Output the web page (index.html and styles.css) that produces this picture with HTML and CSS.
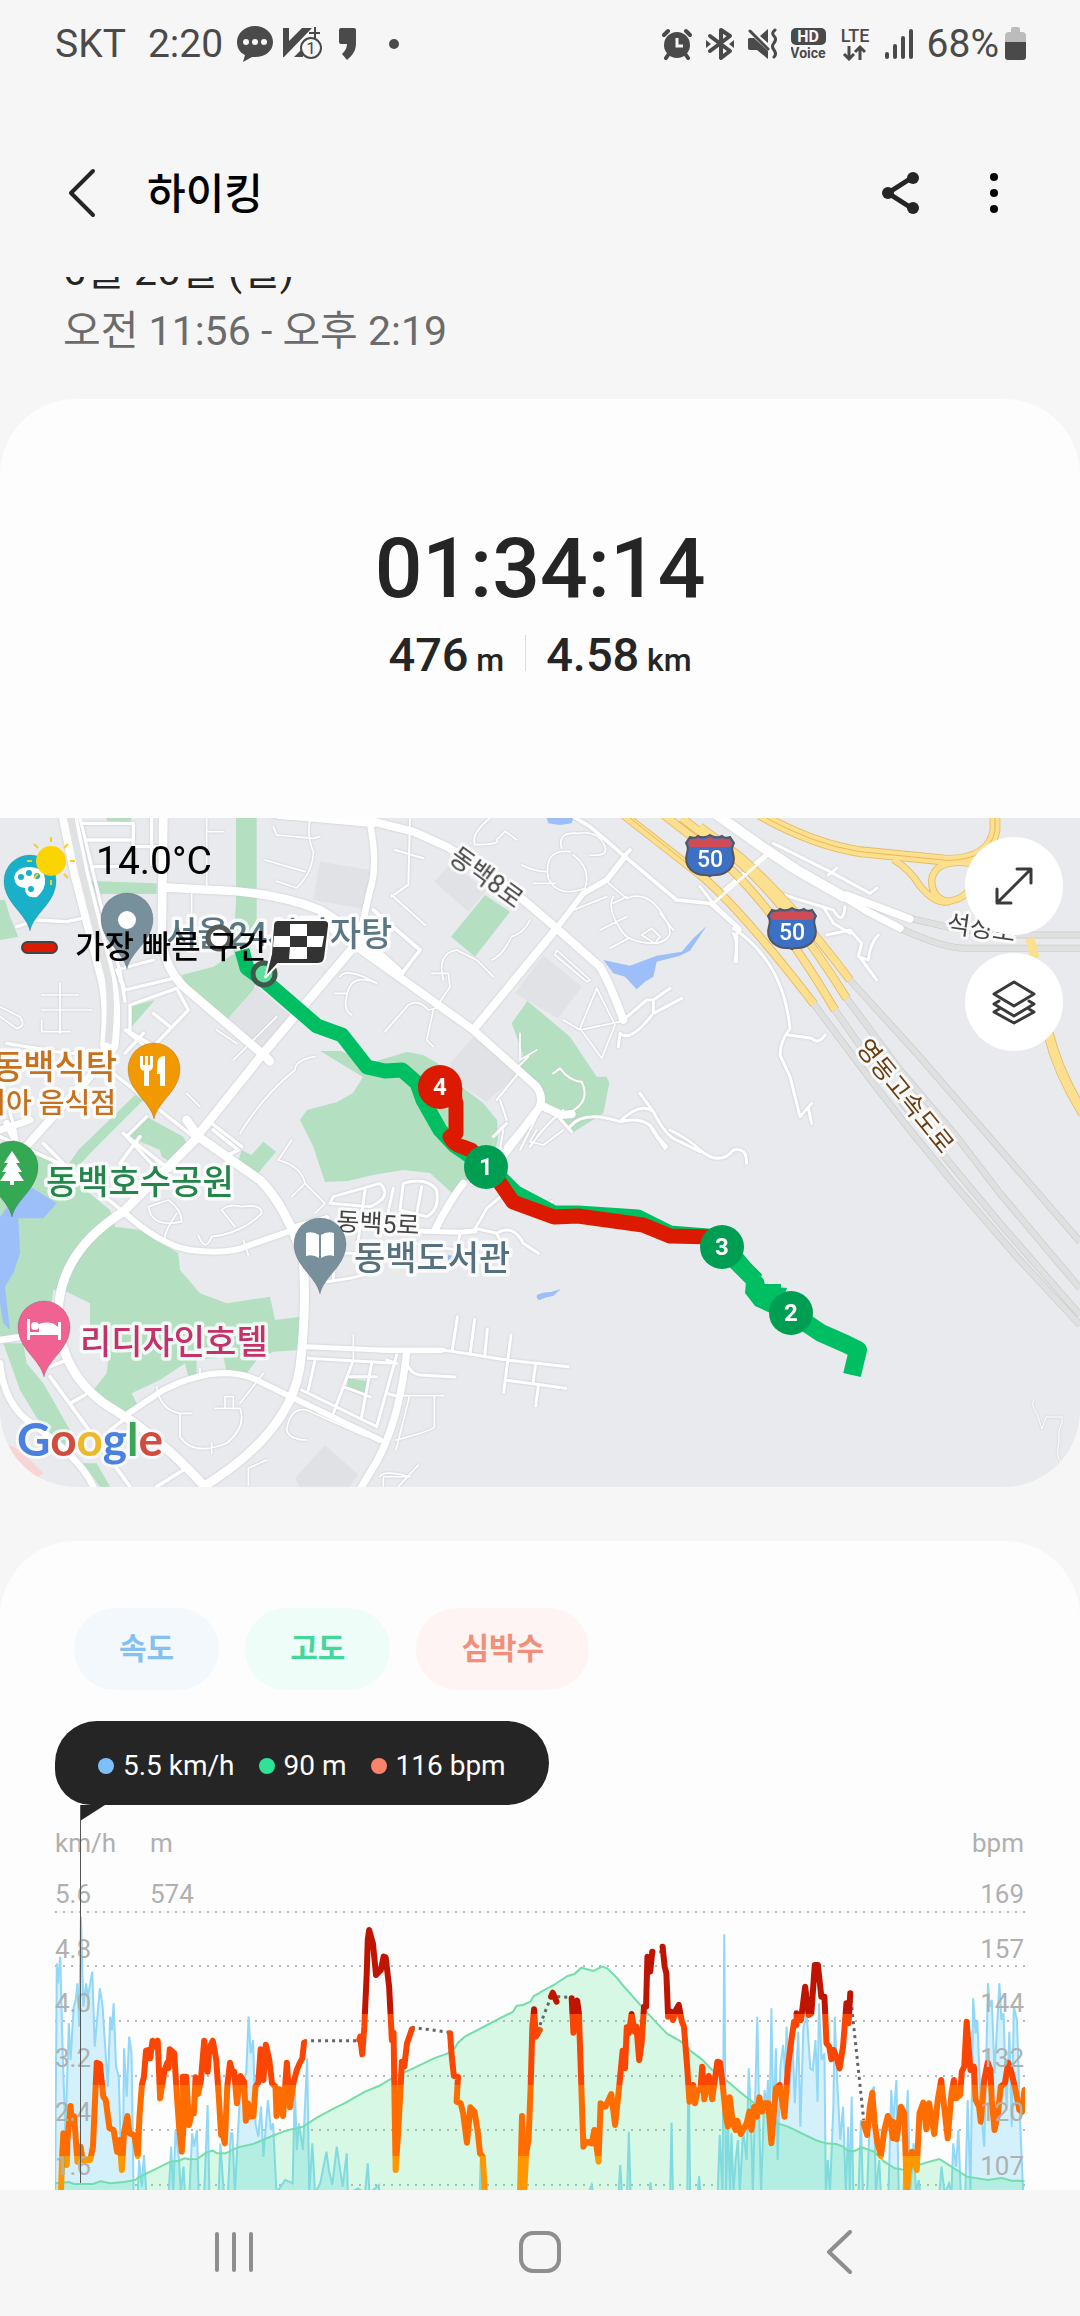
FILE: index.html
```html
<!DOCTYPE html>
<html lang="ko">
<head>
    <meta charset="utf-8">
    <title>하이킹</title>
    <meta name="viewport" content="width=device-width, initial-scale=1">
    <link rel="stylesheet" href="styles.css">
</head>
<body>
    <div class="status-bar">
        <div class="status-left">
            <span>SKT</span>
            <span class="clock">2:20</span>
            <svg class="talk" width="36" height="36" viewBox="0 0 36 36"><path fill="#4a4a4a" d="M18 0C8 0 0 7 0 16c0 6 3 11 8 13L6 36l9-5h3c10 0 18-6 18-15S28 0 18 0z"/><g fill="#f6f6f6"><circle cx="9" cy="16" r="3"/><circle cx="18" cy="16" r="3"/><circle cx="27" cy="16" r="3"/></g></svg>
            <svg width="40" height="34" viewBox="0 0 40 34"><path fill="#4a4a4a" d="M0 1h6v13L19 1h10L1 30H0zM11 30l9-9v9z"/><path stroke="#4a4a4a" stroke-width="2" fill="none" d="M26 6h11M32 0v11"/><circle cx="28" cy="21" r="10" fill="#f6f6f6" stroke="#4a4a4a" stroke-width="2"/><text x="28" y="27" class="badge-num">1</text></svg>
            <svg class="quote" width="18" height="32" viewBox="0 0 18 32"><path fill="#4a4a4a" d="M2 0h13q2 0 2 2v13c0 7-3 12-9 17l-5-6c3-3 5-6 5-10H2q-2 0-2-2V2q0-2 2-2z"/></svg>
            <i class="more-dot"></i>
        </div>
        <div class="status-right">
            <svg width="30" height="32" viewBox="0 0 30 32"><circle cx="15" cy="17" r="13" fill="#4a4a4a"/><path stroke="#4a4a4a" stroke-width="4" stroke-linecap="round" fill="none" d="M2 7l4-4M28 7l-4-4M6 27l-2 3M24 27l2 3"/><path stroke="#f6f6f6" stroke-width="3" fill="none" d="M15 10v8h6"/></svg>
            <svg width="28" height="34" viewBox="0 0 28 34"><path stroke="#4a4a4a" stroke-width="4" stroke-linejoin="round" stroke-linecap="round" fill="none" d="M4 9l20 15-9 7V3l9 6L4 24"/><path fill="#4a4a4a" d="M0 13l5 4-5 4zM28 13l-5 4 5 4z"/></svg>
            <svg width="29" height="32" viewBox="0 0 29 32"><path fill="#4a4a4a" d="M0 11q0-1 2-1h4l14 13v8L9 22H2q-2 0-2-2zM12 8l8-7v14z"/><path stroke="#4a4a4a" stroke-width="3" stroke-linecap="round" fill="none" d="M2 3l18 18M27 2q-4 3-1 6t0 7q-3 3 0 7t0 7"/></svg>
            <svg width="35" height="32" viewBox="0 0 35 32"><rect width="35" height="17" rx="5" fill="#4a4a4a"/><text x="17" y="14" class="hd">HD</text><text x="17" y="30" class="voice">Voice</text></svg>
            <svg width="30" height="34" viewBox="0 0 30 34"><text x="15" y="15" class="lte">LTE</text><path stroke="#4a4a4a" stroke-width="3" fill="none" d="M9 19v13M4 27l5 5 5-5M20 33V20M15 25l5-5 5 5"/></svg>
            <svg width="29" height="32" viewBox="0 0 29 32"><path stroke="#4a4a4a" stroke-width="4" stroke-linecap="round" d="M3 26v3M11 18v11M19 10v19M27 3v26"/></svg>
            <div class="battery">
                <span>68%</span>
                <svg width="21" height="34" viewBox="0 0 21 34"><path fill="#bcbcbc" d="M6 2q0-2 2-2h5q2 0 2 2v3h2q4 0 4 4v8H0V9q0-4 4-4h2z"/><path fill="#4a4a4a" d="M0 15h21v15q0 3-3 3H3q-3 0-3-3z"/></svg>
            </div>
        </div>
    </div>

    <header class="app-bar">
        <button class="icon-btn" aria-label="뒤로"><svg width="28" height="50" viewBox="0 0 28 50"><path fill="none" stroke="#252525" stroke-width="4" stroke-linecap="round" stroke-linejoin="round" d="M25 3L3 25l22 22"/></svg></button>
        <h1>하이킹</h1>
        <button class="icon-btn share" aria-label="공유"><svg width="40" height="44" viewBox="0 0 40 44"><path fill="none" stroke="#252525" stroke-width="5" d="M32 6L7 22l25 16"/><g fill="#252525"><circle cx="32" cy="7" r="6"/><circle cx="7" cy="22" r="6"/><circle cx="32" cy="37" r="6"/></g></svg></button>
        <button class="icon-btn" aria-label="더보기"><svg width="10" height="44" viewBox="0 0 10 44"><circle cx="5" cy="6" r="4"/><circle cx="5" cy="22" r="4"/><circle cx="5" cy="38" r="4"/></svg></button>
    </header>

    <main>
        <div class="when">
            <p class="date">6월 26일 (일)</p>
            <p class="time">오전 11:56 - 오후 2:19</p>
        </div>

        <section class="card summary">
            <div class="duration">01:34:14</div>
            <div class="stats">
                <span class="stat">476 <small>m</small></span>
                <span class="stat">4.58 <small>km</small></span>
            </div>
            <div class="map">
                <svg class="map-svg" viewBox="0 818 1080 669">
                    <defs>
                        <path id="pin" d="M0 50C-4 32-26 22-26 0a26 26 0 1 1 52 0C26 22 4 32 0 50z"/>
                        <g id="shield">
                            <path fill="#3b70c4" stroke="#55555c" stroke-width="2" d="M-20-20q5 2 8-1 6 3 12-1 6 4 12 1 3 3 8 1l4 6q-3 5-1 10 3 10-4 17-6 5-13 5-6 0-6 2 0-2-6-2-7 0-13-5-7-7-4-17 2-5-1-10z"/>
                            <path fill="#cf4c55" d="M-19-18q4 1 7-1 6 3 12-1 6 4 12 1 3 2 7 1l3 4-2 4h-40l-2-4z"/>
                            <text y="10" class="shield-num">50</text>
                        </g>
                    </defs>
                    <rect y="818" width="1080" height="669" fill="#e8eaed"/>

                    <!-- parks, blocks, water -->
                    <path fill="#b4e0c1" d="M373 1062l34-10 16 3 14 8 25 24 21 16 14 17 1 20-5 17-41 36-22-20-27-3-30 5-25 6-23 1-12-36-13-26 7-10 30-8 16-9 10-16-43-26 20 0z"/>
                    <g transform="translate(0 800) scale(.33333)">
                        <path fill="#b4e0c1" d="M708 54h62v346l-70 60 8-160zM545 525l95-25 65-40 65 80-10 30-75 85-85-35-40-50zM272 243l198 7v32H290zM320 54h75l-5 14-70-4zM0 300h15l15 50 25 60-55 10zM390 620l75-20-35 40-35 40zM405 885l25 15-150 150h-45zM440 950l110 60 20 40h-90l-95-40z"/>
                        <path fill="#e0e2e6" d="M960 185l150 25v120l-170-30zM770 560l100 85-80 105-105-95z"/>
                    </g>
                    <g transform="translate(340 800) scale(.33333)">
                        <path fill="#e0e2e6" d="M330 190l110 80-55 65-102-90zM610 465l115 95-70 95-130-75zM400 710l135 110-95 85-70-45-40-70z"/>
                        <path fill="#b4e0c1" d="M435 285l75 50-105 135-72-60zM562 603l-47 67 35 95-15 35 55 50 20 50 30 30 25 20 30 50 95-60 18-90-8-20h-30l-50-75-30-45z"/>
                        <path fill="#9dbff9" d="M620 54h80l-5 16-35 5-35-5zM790 480l80 17 80-30 75-12 35-40 40-37-25 37-25 37-30 15-70 18-10 45-25 15-25 23-35-38-35-10z"/>
                    </g>
                    <g transform="translate(0 1130) scale(.33333)">
                        <path fill="#b4e0c1" d="M235 60h45l-65 70-15-20zM480 60h90l-60 35-25-15zM725 60l30 15 35-40 38 30-63 75-55-30z"/>
                        <path fill="#b4e0c1" d="M110 60l220 180 15 50 75 10 115 70 5 50 60 70 80 30 130-20 15 70 75-10-5 100-75 5-50 25-30 40-60-5-10-45-80 10v45l-25 5-10-40-75 50-85 40 20 40-45 20-90-70 40-50 10-80-60-30V520l-70-35-40-5-10 80-90 60-60 10V100z"/>
                        <path fill="#9dbff9" d="M75 160l95 60-40 45H55l5 105-20 60-25 40 15 130-20-20-10-60V260z"/>
                        <path fill="#b4e0c1" d="M10 640h60l10 60 50 60 80 140-20 60-70-80-60-100zM250 1000h40l40 70h-30zM1045 745l67 10-17 45-55-20z"/>
                        <path fill="#fad4d4" d="M25 945l35 15 70 70-20 15-50-35z"/>
                        <path fill="#dfe1e4" d="M975 945l100 90-25 35H900l-15-25z"/>
                    </g>
                    <path fill="#9dbff9" d="M537 1295q5-3 14-3l10-3-8 7q-8 1-13 4-4 0-3-5zM448 1255l8 1-3 7-5-2z"/>

                    <!-- grey tunnels of the expressway -->
                    <g transform="translate(700 800) scale(.33333)" fill="none">
                        <g stroke="#c9cacb" stroke-width="21">
                            <path d="M340 610l180 240 110 140 130 160 190 220 190 205M405 630l155 220 190 240 150 180 240 275M440 595l160 215 170 200 130 170 240 285M450 540l200 220 200 230 290 335"/>
                            <path d="M600 385q130 60 200 60h350M630 355l130 30 180 20h210"/>
                        </g>
                        <g stroke="#dfe0e0" stroke-width="17">
                            <path d="M340 610l180 240 110 140 130 160 190 220 190 205M405 630l155 220 190 240 150 180 240 275M440 595l160 215 170 200 130 170 240 285M450 540l200 220 200 230 290 335"/>
                            <path d="M600 385q130 60 200 60h350M630 355l130 30 180 20h210"/>
                        </g>
                    </g>

                    <!-- roads -->
                    <g class="roads">
                        <g transform="translate(0 800) scale(.33333)">
                            <path stroke-width="56" d="M205 54l35 170 80 310q20 80 8 200"/>
                            <path stroke="#dfe1e3" stroke-width="22" d="M212 54l35 170 78 310q12 80 0 190"/>
                            <path stroke-width="24" d="M320 740q-30 80-90 130L60 1060"/>
                            <path stroke-width="26" d="M490 54l-5 370q15 90 70 140l235 200 20 20M490 262l150 8q180 5 320 60 90 50 240 190M1070 430L790 760 590 1010"/>
                            <path stroke-width="20" d="M820 44l300 28M1110 70q25 130 0 200l-20 90-30 80"/>
                            <path stroke-width="10" d="M240 54l65 270 55 190 15 90M250 70h150v130h-120M400 140h80M260 120h140M50 380l60-20 90 5 45-10M350 510l110-30M360 540l15 30 145-35M350 510l20 45M20 730l180 30h120M390 690v-75l140-50 35 65-115 120-75-60M430 700l-55 60M380 690l150 90M460 640l50 40M0 830l45 160 10 60M340 820l240 190M380 1010l110 120M635 970l90 70M440 950l-60 60M455 54v140"/>
                            <path stroke-width="5" d="M620 54v210M620 95h50M820 80l10 25 110 10 20-5M930 54q-10 60 10 100 0 60-50 110l-60-20M795 180l120 35M575 280v60M180 550v150M125 585h110M125 630h150M125 660v35h85M0 620l60 30q20 30-10 35L0 650M1005 580h35M1120 545q-60-20-75 25-20 60 10 75M830 650l-130 130M560 880l40 40M650 690l60 40M945 770q-60 10-60 40-90 70-165 190"/>
                        </g>
                        <g transform="translate(340 800) scale(.33333)">
                            <path stroke-width="24" d="M-180 45l280 20 120 30 100 45 160 100 170 145 130 115q30 50 70 160M-20 390l420 300 190 170q20 30 10 60L480 1080M400 690l250-305M600 915l65 30 30-3"/>
                            <path stroke-width="17" d="M650 385l80-105 70-40 55-70M480 1050l-80 100"/>
                            <path stroke-width="11" d="M100 330l140 120-50 65M690 44l60 36 105 90 155 130 100 10 90 80M870 150l-20 20"/>
                            <path stroke-width="9" d="M850 660l70-60h20l50-35M940 600v40l85-45M940 640q-70 90-100 60l-5 40M655 950l40 45M690 980q40-50 150-15 60-60 100-30l-40-55M840 965q90-20 110 45l25 35M940 935q40 80 80 90l60 30M460 1010l40-40M1180 400q15 20 5 85"/>
                            <path stroke-width="6" d="M210 54l-5 200-50 35M165 150l85 25M155 285l100 90M640 820l20-15q30 40 65 40 30 60-40 95l-40 5M565 770l-30 30M470 900l65-80M480 900l20 60M600 930l-60 120M670 930q-60 50-100 110"/>
                            <path stroke-width="5" d="M450 54q-60 50-45 80 80 0 65-15l25-25 35 25M545 195q40 20 75 20M690 155q-80-10-65 80 30 60 110 30 20-60-35-100M665 145q-15-50 50-45 60-10 80 40 10 30-45 25M580 250h65M800 245l60 50q70-30 120 70 30 50-30 65-90 0-110-45-40-60-20-95M860 290l-40 20M780 390l80-40M810 445l55-30M905 405l30-20 25 25-15 20zM960 340l40 50M650 450l100 90-10 5-95-80zM700 330l100-40M770 565l-50 120 65 90 40-100zM670 660l50 30 120-25M310 540q-20-80 40-90l60 30 50 50M275 520h50l5 40-40 60M135 695l70-80q30-20 60 15l40-10M280 630l-20 90 20 20M0 530q20-30 110 20M570 360q-20 40-55 50-30 60-60 70M540 700v80l50-30"/>
                        </g>
                        <g transform="translate(700 800) scale(.33333)">
                            <path stroke-width="30" d="M30 30l170 120 90 60 140 80"/>
                            <path stroke-width="22" d="M420 283l80 50 100 52M440 285l190 72"/>
                            <path stroke-width="9" d="M220 130l180 90 110 60 20-15M385 225l25-20M100 385q150 100 170 300-30 40-30 80l30 65 30 120 35-40M325 925l10 45M265 705l70 10q20 20 40-10M60 280l140-120M0 260l40 50 80 75M150 190l60 60 30 30 60 20 100 30q30 50 35-10M370 320l30 50 50 30M380 405l70-15 35 40-10 40 30 10q5-50 30-75M475 465l55 75M110 400v85"/>
                        </g>
                        <g transform="translate(0 1130) scale(.33333)">
                            <path stroke-width="27" d="M560-30l35 50 185 130q80 80 130 240 10 160-10 320-30 200-290 360M595 20L370 245q-190 120-195 300 0 170 130 270l100 65q110 80 210 190"/>
                            <path stroke-width="18" d="M370 245q110 100 200 115 120 15 180-15l230-80M370 860l120-80q180-90 300-20l350 170"/>
                            <path stroke-width="20" d="M0 630l80-12M0 700q10 110 80 170 160 110 200 200M0 0l90-30M20-20l20 40"/>
                            <path stroke-width="11" d="M150 740l240 330M210 820l45-25M330 900l40-30M550 1020l-80 50M0 20l200 90 170 135M370 10l140 110M420 20l-60 80M640 0l75 60-40 20M130 40l80 80M150 710l50-20"/>
                            <path stroke-width="15" d="M920 650l270 12h130"/>
                            <path stroke-width="9" d="M925 685l260 15M945 690l-20 90M905 780l225 110 60-215M1060 690l-60 160M1115 700l-30 160M1030 770l80 30M1050 740h80M1000 450l5-80h70M980 455l70-10 80-20M1000 200l140-40q40 40-30 70l-120-10zM1095 180l-20 150M870 290l110-30"/>
                            <path stroke-width="5" d="M445 230l60-20q40 30 40 65-90 20-100-45zM530 250q-40 60-35 80M665 240q20-20 60-10 60-10 60 20-60 60-150 70-20 50-40-5M665 240l40 50M730 330l15 45M875 30l-40 60q70 20 80 70l-40 40M915 160l60 60-30 30M470 770q10 70 70 80v70q40 60 140 20 60-50 40-105h-75M575 850h-40M675 830v-30h25v30M635 940v30M720 820l70-90M1060 615v80M600 715v30M860 900q10-70 60-60l180 80M860 900q10 30 60 30M745 1065v-50q20-10 55-25M1150 1070v-30h80"/>
                        </g>
                        <g transform="translate(380 1130) scale(.33333)">
                            <path stroke-width="22" d="M250 160q-40 50-85 140M80 665q-20 200-90 330l-60 100"/>
                            <path stroke-width="15" d="M110 303l130 4 45-4M0 660h190M430-10l-50 60"/>
                            <path stroke-width="9" d="M190 660l190 30 185 20M232 560l-15 100M284 568l-14 105M322 598l-8 80M393 615l-22 172M375 750l182 25M467 700l-8 60M475 770l-8 58M80 700q10 30 40 35l105 6M285 295q20-30 35-60l60-50M285 295l65 15 20 40M350 310q50-30 80 30l45 30M240 310l-10 50-130-20M70 160q70-20 100 20 10 60-30 80l-80-20zM125 170l-20 110M40 175l-20 90M20 690l30 10M20 790l30 8M505 220l10-5M860 50l-40-45-10-20M870 0q60 30 90 60 60 50 100 0 40-10 40 40"/>
                            <path stroke-width="5" d="M50 797h140M88 800l-40 160M163 800v90q0 10-115 40M115 1005l-60 65M0 1040q10-20 80-2M370 0l-10 60M470 0l-20 35 40 10 60-45"/>
                        </g>
                        <path stroke-width="1" d="M1034 1400q-4 4 3 14l5 15 4-12h16v6q-4 6-3 19-4 14 3 22"/>
                    </g>

                    <!-- expressway -->
                    <g transform="translate(700 800) scale(.33333)" fill="none">
                        <g stroke="#e3b964">
                            <path stroke-width="26" d="M-230 44l230 180q120 100 342 388M-110 44L40 160q170 140 365 470M-55 54l165 125q150 130 330 416M0 80l120 90q150 130 330 370"/>
                            <path stroke-width="32" d="M180 44q160 90 300 111l260 26q130 0 145-90V44M1045 700q30 120 105 240"/>
                            <path stroke-width="22" d="M580 178q50 30 80 80 50 60 90 45 60-10 65-60M815 190q-110-15-120 50 0 60 55 65"/>
                        </g>
                        <g stroke="#fde08f">
                            <path stroke-width="21" d="M-230 44l230 180q120 100 342 388M-110 44L40 160q170 140 365 470M-55 54l165 125q150 130 330 416M0 80l120 90q150 130 330 370"/>
                            <path stroke-width="27" d="M180 44q160 90 300 111l260 26q130 0 145-90V44M1045 700q30 120 105 240M990 415l15 60"/>
                            <path stroke-width="17" d="M580 178q50 30 80 80 50 60 90 45 60-10 65-60M815 190q-110-15-120 50 0 60 55 65"/>
                        </g>
                        <path stroke="#e9b75a" stroke-width="3" d="M180 44q160 90 300 111l260 26q130 0 145-90V44M-210 54L-20 205"/>
                        <path stroke="#fff" stroke-width="8" d="M40 310l170-150"/>
                    </g>

                    <!-- places -->
                    <g class="place">
                        <text x="117" y="1079" text-anchor="end" fill="#c5711d">동백식탁</text>
                        <text x="116" y="1113" text-anchor="end" fill="#c5711d" class="sub">이탈리아 음식점</text>
                        <text x="166" y="946" fill="#5b7786">서울24시감자탕</text>
                        <text x="46" y="1194" fill="#22854a">동백호수공원</text>
                        <text x="80" y="1354" fill="#c7316b">리디자인호텔</text>
                        <text x="354" y="1270" fill="#56707f">동백도서관</text>
                    </g>
                    <g class="road-name">
                        <text transform="translate(448 860) rotate(36)">동백8로</text>
                        <text transform="translate(336 1230) rotate(3)">동백5로</text>
                        <text transform="translate(946 932) rotate(8)">석성로</text>
                        <text transform="translate(855 1048) rotate(51)" fill="#6b3d10">영동고속도로</text>
                    </g>
                    <use href="#shield" x="710" y="857"/>
                    <use href="#shield" x="792" y="930"/>

                    <g stroke-opacity=".15" stroke="#000">
                        <use href="#pin" x="30" y="881" fill="#18b1c9"/>
                        <use href="#pin" x="127" y="919" fill="#78909c"/>
                        <use href="#pin" x="154" y="1069" fill="#f29900"/>
                        <use href="#pin" x="12" y="1167" fill="#34a853"/>
                        <use href="#pin" x="320" y="1244" fill="#78909c"/>
                        <use href="#pin" x="44" y="1327" fill="#f06292"/>
                    </g>
                    <g fill="#fff">
                        <path d="M14 877q3-10 14-10 16 0 17 12 1 10-8 18-12 2-12-9-10 0-11-11z"/>
                        <circle cx="127" cy="920" r="9"/>
                        <path d="M140 1056h3v9h2v-9h3v9h2v-9h3v10q0 4-4 5v15h-5v-15q-4-1-4-5zM165 1086h-5v-12h-3v-9q0-9 8-9z"/>
                        <path d="M12 1151l8 12h-4l6 9h-4l6 9H14v4h-4v-4H0l6-9H2l6-9H4z"/>
                        <path d="M306 1233q7-2 13 2v23q-6-4-13-2zM334 1233q-7-2-13 2v23q6-4 13-2z"/>
                        <path d="M27 1319h3v13h9v-8q12-4 19 3v-5h3v18h-3v-5H30v5h-3z"/><circle cx="35" cy="1326" r="4"/>
                    </g>
                    <g fill="#18b1c9"><circle cx="21" cy="877" r="3"/><circle cx="29" cy="873" r="3"/><circle cx="37" cy="876" r="3"/><circle cx="31" cy="889" r="3"/></g>

                    <!-- track -->
                    <g fill="none" stroke-width="15" stroke-linejoin="round">
                        <circle cx="219" cy="938" r="11" fill="#fff" stroke="#555b59" stroke-width="5"/>
                        <path stroke="#00bf63" d="M242 950l5 18 18 13 52 45 25 9 25 32 18 4 17-1 15 13 6 17 17 30 14 15 32 22M486 1163l30 30 38 20h24l60 4 32 16 50 4"/>
                        <path stroke="#00bf63" stroke-width="18" d="M722 1247l34 34M757 1293h24M791 1313l30 20 25 11 12 6-6 25"/>
                        <path fill="#00bf63" d="M740 1250l24 30 1 6 22 2-10 28-22-10-10-13 1-11-20-20z"/>
                        <path stroke="#dc1a00" d="M455 1087q-1 12 1 16v30l-6 4q4 8 13 10l8 3 15 16 14 17 13 19 41 15 24-1 65 9 27 11 45 1"/>
                    </g>
                    <circle cx="264" cy="974" r="11" fill="#5ee09a" stroke="#3f5a4c" stroke-width="5"/>
                    <path fill="#333" stroke="#fff" stroke-width="2" d="M278 920h46q6 0 5 6l-4 32q-1 6-7 6h-40l-13 14 6-24 2-28q0-6 5-6z"/>
                    <path fill="#fff" d="M290 924h17v12h-17zM274 936h16v11h-17zM307 936h17l-2 11h-15zM290 947h17v12h-18z"/>
                    <g class="km">
                        <circle cx="440" cy="1087" r="22" fill="#dc1a00"/><text x="440" y="1095">4</text>
                        <circle cx="486" cy="1167" r="22" fill="#009e52"/><text x="486" y="1175">1</text>
                        <circle cx="722" cy="1247" r="22" fill="#009e52"/><text x="722" y="1255">3</text>
                        <circle cx="791" cy="1313" r="22" fill="#009e52"/><text x="791" y="1321">2</text>
                    </g>
                    <text x="17" y="1456" class="google"><tspan fill="#4a80e0">G</tspan><tspan fill="#d24b3f">o</tspan><tspan fill="#ecb92b">o</tspan><tspan fill="#4a80e0">g</tspan><tspan fill="#3aa757">l</tspan><tspan fill="#d24b3f">e</tspan></text>
                </svg>
                <div class="weather">
                    <svg width="50" height="50" viewBox="-25 -25 50 50"><circle r="15" fill="#fbd402"/><path stroke="#f7cf20" stroke-width="2" d="M0-24v5M0 19v5M-24 0h5M19 0h5M-17-17l4 4M17-17l-4 4M-17 17l4-4M17 17l-4-4"/></svg>
                    <span>14.0°C</span>
                </div>
                <div class="legend"><i></i>가장 빠른 구간</div>
                <div class="map-buttons">
                    <button aria-label="확대"><svg width="40" height="40" viewBox="0 0 40 40"><path d="M3 37L37 3M23 3h14v14M3 23v14h14"/></svg></button>
                    <button aria-label="지도 유형"><svg width="44" height="46" viewBox="0 0 44 46"><path d="M22 3l20 12-20 12L2 15zM7 22l-5 3 20 12 20-12-5-3M7 30l-5 3 20 11 20-11-5-3"/></svg></button>
                </div>
            </div>
        </section>

        <section class="card chart-card">
            <div class="chips">
                <button class="chip speed">속도</button>
                <button class="chip height">고도</button>
                <button class="chip heart">심박수</button>
            </div>
            <div class="tooltip">
                <span><i class="blue"></i>5.5 km/h</span>
                <span><i class="green"></i>90 m</span>
                <span><i class="red"></i>116 bpm</span>
            </div>
            <svg class="chart" viewBox="55 1805 970 385">
                <defs>
                    <linearGradient id="hr" gradientUnits="userSpaceOnUse" x1="0" y1="0" x2="0" y2="1050">
                        <stop offset=".498" stop-color="#bf1500"/><stop offset=".498" stop-color="#fa4602"/>
                        <stop offset=".7" stop-color="#fa4602"/><stop offset=".7" stop-color="#ff6d00"/>
                        <stop offset=".903" stop-color="#ff6d00"/><stop offset=".903" stop-color="#ff9800"/>
                    </linearGradient>
                </defs>
                <path class="grid" d="M55 1912h970M55 1966h970M55 2021h970M55 2076h970M55 2130h970M55 2185h970"/>
                <!-- first half of the workout -->
                <g transform="translate(0 1840) scale(.34435 .33333)">
                    <path class="speed-area" d="M160 1060L165 370 168 430 175 350 182 640 190 880 200 550 205 660 214 500 220 480 225 430 230 560 235 230 242 500 250 430 255 470 262 430 268 395 275 620 290 445 298 500 313 740 320 530 325 570 330 490 337 680 345 710 350 900 358 860 360 625 368 770 375 590 382 640 388 1060 400 1060 404 960 412 1040 418 945 425 1060 490 1060 497 920 503 1060 510 870 520 960 525 1060 533 980 537 1060 550 1060 558 880 564 920 572 870 577 1060 593 1060 603 795 608 1060 635 1060 640 910 650 1060 662 1060 670 880 675 880 682 1060 700 700 707 720 715 700 722 530 728 640 735 600 742 850 750 890 758 800 765 950 778 780 787 870 793 850 803 1060 815 1040 828 1020 840 1025 850 1030 856 740 862 930 868 850 880 930 892 655 898 1060 907 910 915 1060 930 1030 948 935 955 990 965 1035 978 920 985 970 995 1040 1007 940 1010 1060 1040 1045 1060 1060 1068 970 1073 1060 1100 1035 1102 1060 1393 1060 1396 960 1400 1060"/>
                    <path class="alt-area" d="M160 1060V1030L200 1026 215 1032 270 1032 292 1024 320 1030 360 1026 392 1020 415 1005 450 988 495 965 520 962 535 955 550 958 572 957 600 937 618 932 630 940 655 940 690 922 735 912 790 888 830 872 880 860 920 833 970 805 1000 790 1060 755 1100 738 1150 708 1200 685 1260 655 1300 640 1320 625 1330 608 1350 590 1420 552 1490 515 1500 498 1520 494 1540 485 1550 468 1568 458V1060"/>
                    <path class="alt-line" d="M160 1030L200 1026 215 1032 270 1032 292 1024 320 1030 360 1026 392 1020 415 1005 450 988 495 965 520 962 535 955 550 958 572 957 600 937 618 932 630 940 655 940 690 922 735 912 790 888 830 872 880 860 920 833 970 805 1000 790 1060 755 1100 738 1150 708 1200 685 1260 655 1300 640 1320 625 1330 608 1350 590 1420 552 1490 515 1500 498 1520 494 1540 485 1550 468 1568 458"/>
                    <path class="hr-gap" d="M883 602H1045M1196 562L1305 577"/>
                    <path class="hr-line" d="M177 1060L180 960 184 880 194 975 196 900 205 798 208 850 215 828 225 965 234 920 240 960 262 960 270 920 276 780 281 668 290 672 300 770 307 780 318 865 330 870 340 935 347 900 354 990 360 880 370 828 376 880 390 885 400 948 405 830 412 735 418 710 424 632 430 630 436 655 443 602 450 620 458 602 465 775 478 690 486 668 489 685 493 628 506 640 512 740 520 860 528 935 533 860 531 710 541 710 549 855 556 820 563 820 568 712 575 762 583 725 593 602 603 695 608 625 618 602 628 660 636 780 642 885 648 890 653 910 660 740 668 668 676 700 680 695 688 790 698 708 709 725 714 842 720 790 727 830 736 828 742 740 750 728 757 628 765 720 772 614 782 660 790 730 800 740 803 828 812 748 822 828 833 668 842 802 852 730 862 690 870 670 878 655 883 608M1043 600L1046 590 1052 643 1058 560 1065 400 1068 300 1072 270 1083 310 1092 405 1106 390 1114 350 1120 352 1130 440 1138 600 1143 578 1146 800 1149 990 1156 880 1163 750 1167 665 1174 680 1182 610 1196 568M1307 580L1312 650 1318 708 1330 710 1326 785 1338 790 1345 820 1356 908 1366 802 1378 815 1388 880 1394 940 1402 950 1408 1060M1510 1060L1516 828 1520 940 1522 1060 1528 940 1535 900 1541 740 1546 560 1551 508 1556 590 1568 570"/>
                </g>
                <!-- second half -->
                <g transform="translate(540 1840) scale(.34435 .33333)">
                    <path class="speed-area" d="M140 1060L150 1035 155 1060 228 1060 233 975 238 1060 253 1060 258 875 263 1060 318 1060 321 1027 324 1060 378 1060 382 848 386 1060 428 1060 431 620 436 1060 458 1060 462 1008 466 1060 516 1060 522 885 530 1060 535 283 540 1060 546 850 552 1060 556 880 562 1060 568 960 575 900 580 1060 590 870 600 960 606 685 612 800 618 1060 631 530 638 900 642 1060 652 750 658 800 662 720 666 900 672 505 678 860 685 625 690 960 698 680 706 615 712 700 716 560 724 760 733 600 740 790 750 575 756 860 765 560 775 530 785 685 792 690 800 600 806 785 810 490 818 660 826 640 830 1060 836 960 842 1060 852 800 856 530 862 700 872 900 880 800 888 1060 895 860 900 1060 905 770 910 1060 925 1060 932 840 938 1060 950 1060 960 760 970 740 975 1060 985 960 990 1060 1012 1060 1020 750 1026 850 1035 720 1042 1060 1055 1060 1068 750 1075 1060 1085 910 1092 1060 1100 1020 1104 1060 1160 1060 1166 980 1175 1060 1188 1030 1195 1060 1200 910 1208 980 1215 870 1222 1060 1235 1060 1242 780 1250 1060 1258 475 1265 580 1270 540 1280 800 1290 920 1301 430 1306 500 1312 480 1320 700 1334 430 1340 540 1346 520 1355 810 1363 575 1370 860 1376 500 1385 540 1395 860 1403 1060"/>
                    <path class="alt-area" d="M0 1060V457L40 435 80 408 100 402 120 383 155 393 180 380 195 385 225 415 240 435 300 505 340 550 370 582 410 605 440 635 470 658 500 690 540 720 580 755 640 805 690 850 720 860 800 900 830 910 860 912 880 920 895 933 915 932 935 922 970 935 1000 965 1030 985 1060 990 1100 975 1130 965 1160 957 1180 970 1210 990 1240 1010 1300 1020 1340 1014 1370 1022 1407 1023V1060"/>
                    <path class="alt-line" d="M0 457L40 435 80 408 100 402 120 383 155 393 180 380 195 385 225 415 240 435 300 505 340 550 370 582 410 605 440 635 470 658 500 690 540 720 580 755 640 805 690 850 720 860 800 900 830 910 860 912 880 920 895 933 915 932 935 922 970 935 1000 965 1030 985 1060 990 1100 975 1130 965 1160 957 1180 970 1210 990 1240 1010 1300 1020 1340 1014 1370 1022 1407 1023"/>
                    <path class="hr-gap" d="M0 555L32 470M50 470L90 472M326 335H355M901 460L940 840"/>
                    <path class="hr-line" d="M32 470L37 458 48 485M92 475L97 578 103 500 108 482 113 520 120 740 126 920 134 905 150 910 158 870 170 965 176 790 190 800 207 762 218 855 230 740 240 632 247 685 252 562 258 580 266 522 275 575 280 560 288 660 295 610 302 500 308 500 312 350 320 395 326 335M356 320L362 380 367 400 372 530 380 515 386 540 395 510 403 495 412 545 418 560 428 690 434 785 445 735 450 790 458 750 466 750 471 680 477 778 490 708 500 778 515 665 523 668 532 750 540 830 546 860 551 772 560 850 568 870 573 842 583 882 600 850 608 815 614 870 622 800 630 830 637 772 645 815 653 790 663 790 672 910 685 745 696 735 710 830 720 680 730 600 738 545 745 555 745 520 758 540 770 440 780 525 788 520 798 375 807 375 817 470 826 470 832 610 840 620 846 658 853 630 862 655 870 685 880 620 890 490 896 550 901 460M940 850L950 885 958 800 965 758 972 850 980 910 990 948 1000 870 1010 828 1018 845 1025 895 1026 845 1036 898 1048 800 1058 820 1065 1060 1070 1000 1080 935 1094 990 1102 820 1113 788 1122 868 1130 790 1145 882 1155 780 1165 720 1184 895 1195 760 1202 720 1208 775 1220 765 1225 695 1232 680 1239 545 1250 690 1260 680 1265 780 1275 800 1280 845 1290 720 1300 668 1308 690 1312 780 1320 870 1330 820 1338 740 1350 730 1360 668 1370 700 1382 755 1392 810 1400 815 1407 750"/>
                </g>
                <g class="axis">
                    <text x="55" y="1852">km/h</text><text x="150" y="1852">m</text>
                    <text x="55" y="1903">5.6</text><text x="150" y="1903">574</text>
                    <text x="55" y="1958">4.8</text><text x="55" y="2012">4.0</text><text x="55" y="2067">3.2</text><text x="55" y="2121">2.4</text><text x="55" y="2175">1.6</text>
                </g>
                <g class="axis end">
                    <text x="1024" y="1852">bpm</text><text x="1024" y="1903">169</text><text x="1024" y="1958">157</text><text x="1024" y="2012">144</text><text x="1024" y="2067">132</text><text x="1024" y="2121">120</text><text x="1024" y="2175">107</text>
                </g>
                <path fill="#252525" d="M80 1805h25l-25 16z"/>
                <path stroke="#555" stroke-width="1" d="M80.5 1805V2183"/>
            </svg>
        </section>
    </main>

    <nav class="nav-bar">
        <button aria-label="최근 앱"><svg width="40" height="42" viewBox="0 0 40 42"><path d="M3 3v36M20 3v36M37 3v36"/></svg></button>
        <button aria-label="홈"><svg width="42" height="42" viewBox="0 0 42 42"><rect x="2" y="2" width="38" height="38" rx="12"/></svg></button>
        <button aria-label="뒤로"><svg width="26" height="44" viewBox="0 0 26 44"><path d="M24 2L3 22l21 20"/></svg></button>
    </nav>
</body>
</html>
```
FILE: styles.css
```css
* {
    box-sizing: border-box;
}
body {
    margin: 0;
    background: #f6f6f6;
    color: #252525;
    font-family: Roboto, "Noto Sans CJK KR", sans-serif;
}
h1, p {
    margin: 0;
    font-weight: 400;
}
svg {
    display: block;
}
button {
    margin: 0;
    padding: 0;
    border: none;
    background: none;
    font-family: inherit;
    cursor: pointer;
}

/* status bar */
.status-bar {
    display: flex;
    justify-content: space-between;
    align-items: center;
    height: 88px;
    padding: 0 54px 0 55px;
    color: #4a4a4a;
    font-size: 39px;
    line-height: 46px;
}
.status-left, .status-right, .battery {
    display: flex;
    align-items: center;
}
.status-left {
    gap: 10px;
}
.clock {
    margin: 0 4px 0 12px;
}
.quote {
    margin-left: 6px;
}
.more-dot {
    width: 10px;
    height: 10px;
    margin-left: 22px;
    border-radius: 50%;
    background: #4a4a4a;
}
.status-right {
    gap: 14px;
}
.battery {
    gap: 6px;
}
.status-bar text {
    fill: #4a4a4a;
    text-anchor: middle;
    font-weight: 700;
}
.status-bar .badge-num {
    font-size: 17px;
    font-weight: 400;
}
.status-bar .hd {
    fill: #f6f6f6;
    font-size: 16px;
}
.status-bar .voice {
    font-size: 14px;
}
.status-bar .lte {
    font-size: 18px;
    font-weight: 500;
}

/* app bar */
.app-bar {
    display: flex;
    align-items: center;
    height: 189px;
    padding: 21px 81px 0 68px;
}
.app-bar h1 {
    flex: 1;
    margin-left: 51px;
    padding-top: 4px;
    color: #000;
    font-size: 42px;
    font-weight: 500;
    line-height: 56px;
}
.share {
    margin-right: 68px;
}

/* content, scrolled a little under the app bar */
main {
    overflow: hidden;
}
.when {
    margin-top: -36px;
    padding: 0 63px 38px;
    font-size: 41px;
    line-height: 60px;
}
.time {
    color: #6b6b6b;
}
.card {
    background: #fdfdfd;
    border-radius: 76px;
    overflow: hidden;
}
.summary {
    margin-bottom: 54px;
    padding-top: 120px;
}
.duration {
    font-size: 84px;
    font-weight: 500;
    line-height: 100px;
    text-align: center;
}
.stats {
    display: flex;
    justify-content: center;
    margin: 6px 0 128px;
    font-size: 47px;
    font-weight: 500;
    line-height: 60px;
}
.stat + .stat {
    position: relative;
    margin-left: 42px;
}
.stat + .stat::before {
    content: "";
    position: absolute;
    left: -21px;
    top: 10px;
    width: 1px;
    height: 36px;
    background: #ddd;
}
.stat small {
    margin-left: -4px;
    font-size: 32px;
}

/* map */
.map {
    position: relative;
}
.map-svg {
    width: 100%;
}
.roads {
    fill: none;
    stroke: #fff;
    stroke-linejoin: round;
    stroke-linecap: round;
    filter: drop-shadow(0 0 1px #c3c6cb);
}
.place, .road-name {
    paint-order: stroke;
    stroke: #fff;
    stroke-opacity: 0.8;
    stroke-linejoin: round;
}
.place {
    stroke-width: 7px;
    font-size: 34px;
    font-weight: 500;
}
.place .sub {
    font-size: 28px;
}
.road-name {
    stroke-width: 6px;
    fill: #444;
    font-size: 25px;
}
.shield-num {
    fill: #fff;
    font-size: 23px;
    font-weight: 500;
    text-anchor: middle;
}
.km text {
    fill: #fff;
    font-size: 24px;
    font-weight: 700;
    text-anchor: middle;
}
.google {
    paint-order: stroke;
    stroke: #fff;
    stroke-opacity: 0.7;
    stroke-width: 6px;
    stroke-linejoin: round;
    font-family: Lato, sans-serif;
    font-size: 46px;
    font-weight: 700;
}
.weather {
    position: absolute;
    top: 18px;
    left: 26px;
    display: flex;
    align-items: center;
    gap: 20px;
    color: #000;
    font-size: 39px;
    line-height: 46px;
}
.legend {
    position: absolute;
    top: 106px;
    left: 21px;
    display: flex;
    align-items: center;
    gap: 17px;
    color: #000;
    font-size: 32px;
    font-weight: 500;
    line-height: 46px;
}
.legend i {
    width: 37px;
    height: 13px;
    border: 2px solid #444;
    border-radius: 7px;
    background: #dc1a00;
}
.map-buttons {
    position: absolute;
    top: 19px;
    right: 17px;
    display: grid;
    gap: 18px;
}
.map-buttons button {
    display: grid;
    place-items: center;
    width: 98px;
    height: 98px;
    border-radius: 50%;
    background: #fff;
}
.map-buttons path {
    fill: none;
    stroke: #3a3a3a;
    stroke-width: 3;
    stroke-linecap: round;
    stroke-linejoin: round;
}

/* chart */
.chart-card {
    padding: 67px 55px 0;
    border-radius: 76px 76px 0 0;
}
.chips {
    display: flex;
    gap: 26px;
    margin: 0 19px 31px;
}
.chip {
    height: 82px;
    padding: 0 45px;
    border-radius: 41px;
    font-size: 30px;
    font-weight: 700;
    line-height: 40px;
}
.speed {
    background: #f3f8fd;
    color: #84c0f0;
}
.height {
    background: #effdf8;
    color: #45d69b;
}
.heart {
    background: #fdf4f3;
    color: #f28f79;
}
.tooltip {
    display: flex;
    align-items: center;
    gap: 24px;
    width: fit-content;
    height: 84px;
    padding: 6px 43px 0;
    border-radius: 42px 42px 42px 36px;
    background: #252525;
    color: #fff;
    font-size: 28px;
    line-height: 34px;
}
.tooltip span {
    display: flex;
    align-items: center;
    gap: 9px;
}
.tooltip i {
    width: 16px;
    height: 16px;
    border-radius: 50%;
}
.blue {
    background: #7cc0fb;
}
.green {
    background: #30e295;
}
.red {
    background: #fb826b;
}
.chart {
    width: 100%;
}
.chart path {
    vector-effect: non-scaling-stroke;
}
.grid {
    stroke: #b8b8b8;
    stroke-width: 2;
    stroke-dasharray: 2 6;
}
.speed-area {
    fill: #d3f0fb;
    stroke: #91d7f6;
    stroke-width: 2;
}
.alt-area {
    fill: #3ce682;
    fill-opacity: 0.2;
}
.alt-line {
    fill: none;
    stroke: #74ddac;
    stroke-width: 2;
}
.hr-line {
    fill: none;
    stroke: url(#hr);
    stroke-width: 6;
    stroke-linejoin: round;
    stroke-linecap: round;
}
.hr-gap {
    fill: none;
    stroke: #666;
    stroke-width: 3;
    stroke-dasharray: 3 4;
}
.axis {
    fill: #b0b0b0;
    font-size: 26px;
}
.end {
    text-anchor: end;
}

/* system navigation */
.nav-bar {
    display: flex;
    justify-content: center;
    align-items: center;
    gap: 265px;
    height: 126px;
    padding: 0 15px 2px 0;
}
.nav-bar svg {
    fill: none;
    stroke: #8e8e8e;
    stroke-width: 4;
    stroke-linecap: round;
    stroke-linejoin: round;
}
```
